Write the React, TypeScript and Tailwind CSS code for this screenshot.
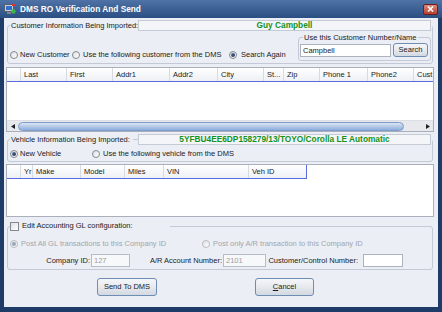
import React from 'react';

const custCols = [
    { label: '', w: 'w-[14px]' },
    { label: 'Last', w: 'w-[46px]' },
    { label: 'First', w: 'w-[46px]' },
    { label: 'Addr1', w: 'w-[57px]' },
    { label: 'Addr2', w: 'w-[48px]' },
    { label: 'City', w: 'w-[46px]' },
    { label: 'St...', w: 'w-[20px]' },
    { label: 'Zip', w: 'w-[36px]' },
    { label: 'Phone 1', w: 'w-[48px]' },
    { label: 'Phone2', w: 'w-[46px]' },
    { label: 'Cust', w: 'w-[30px]' },
];

const vehCols = [
    { label: '', w: 'w-[14px]' },
    { label: 'Yr', w: 'w-[12px]' },
    { label: 'Make', w: 'w-[48px]' },
    { label: 'Model', w: 'w-[44px]' },
    { label: 'Miles', w: 'w-[39px]' },
    { label: 'VIN', w: 'w-[85px]' },
];

function Radio({ checked, disabled }: { checked?: boolean; disabled?: boolean }) {
    return (
        <span
            className={
                'w-[8px] h-[8px] shrink-0 rounded-full border flex items-center justify-center bg-gradient-to-br from-[#dde0e5] to-white ' +
                (disabled ? 'border-[#b9bcc1]' : 'border-[#85888d]')
            }
        >
            {checked ? (
                <span
                    className={
                        'w-[4px] h-[4px] rounded-full ' +
                        (disabled ? 'bg-[#9aa6b8]' : 'bg-gradient-to-br from-[#5a7cae] to-[#1c2b44]')
                    }
                />
            ) : null}
        </span>
    );
}

function HeaderCell({ label, w }: { label: string; w: string }) {
    return (
        <div className={w + ' shrink-0 h-full border-r border-[#d6dae1] pl-[3px] flex items-center overflow-hidden whitespace-nowrap bg-gradient-to-b from-white to-[#eef0f4]'}>
            {label}
        </div>
    );
}

function Btn({ children, w }: { children: React.ReactNode; w: string }) {
    return (
        <button className={w + ' h-full rounded-[3px] border border-[#6e8db5] bg-gradient-to-b from-[#f4f6f9] via-[#e6e9ee] to-[#d3d9e2] flex items-center justify-center text-[#1b1b1b]'}>
            {children}
        </button>
    );
}

function Scrollbar() {
    return (
        <div className="h-[11px] flex items-center bg-[#e7e9ed] border-t border-[#dcdfe5]">
            <div className="w-[11px] h-full flex items-center justify-center">
                <svg width="4" height="5" viewBox="0 0 4 5">
                    <path d="M4 0 L0 2.5 L4 5 Z" fill="#222" />
                </svg>
            </div>
            <div className="w-[386px] h-[9px] rounded-full border border-[#7d9cc7] bg-gradient-to-b from-[#dbe6f5] via-[#b3c9e8] to-[#8eaedb]" />
            <div className="flex-1" />
            <div className="w-[10px] h-full flex items-center justify-center">
                <svg width="4" height="5" viewBox="0 0 4 5">
                    <path d="M0 0 L4 2.5 L0 5 Z" fill="#222" />
                </svg>
            </div>
        </div>
    );
}

export default function App() {
    return (
        <div className="w-[442px] h-[312px] flex flex-col overflow-hidden bg-[#1f3c69] font-['Liberation_Sans',Arial,sans-serif] text-[7.5px] leading-none text-[#1b1b1b]">
            {/* title bar */}
            <div className="h-[18px] shrink-0 flex items-center pl-[4px] pr-[4px] bg-gradient-to-b from-[#4f73a6] to-[#2b4e83]">
                <svg width="12" height="12" viewBox="0 0 12 12">
                    <rect x="0.5" y="1.5" width="9" height="7" fill="#c9ced6" stroke="#56606e" />
                    <rect x="2" y="3" width="6" height="4" fill="#2f6fd0" />
                    <rect x="3" y="9" width="4" height="2" fill="#7d8590" />
                    <circle cx="9.5" cy="8.5" r="2.2" fill="#3bb54a" />
                    <rect x="8" y="1" width="3" height="2" fill="#d33" />
                </svg>
                <span className="ml-[4px] text-white font-bold text-[8.3px]">DMS RO Verification And Send</span>
                <div className="ml-auto w-[15px] h-[11px] rounded-[2px] border border-[#6b1f1f] bg-gradient-to-b from-[#e08a7c] to-[#b73a2c] flex items-center justify-center">
                    <svg width="7" height="6" viewBox="0 0 7 6">
                        <path d="M1 0.5 L6 5.5 M6 0.5 L1 5.5" stroke="white" strokeWidth="1.6" />
                    </svg>
                </div>
            </div>

            {/* client area */}
            <div className="flex-1 mx-[4px] mb-[5px] bg-[#ebeef4] pl-[2px] pr-[4px] flex flex-col">
                {/* customer group */}
                <fieldset className="mt-[2px] mx-[1px] border border-[#c3cad6] rounded-[3px]">
                    <legend className="ml-[2px] px-[1px]">
                        <div className="flex items-center h-[11px]">
                            <span className="w-[122px] whitespace-nowrap">Customer Information Being Imported:</span>
                            <span className="w-[5px]" />
                            <div className="w-[293px] h-[11px] border border-[#c5cbd5] bg-[#f3f5f8] flex items-center justify-center text-[#14921c] font-bold text-[8.3px]">
                                Guy Campbell
                            </div>
                        </div>
                    </legend>
                    <div className="flex items-end pl-[2px] mr-[1px] mt-[2px] mb-[2px]">
                        <label className="w-[62px] h-[10px] mb-[1px] flex items-center gap-[2px]">
                            <Radio />
                            <span>New Customer</span>
                        </label>
                        <label className="w-[157px] h-[10px] mb-[1px] flex items-center gap-[3px]">
                            <Radio />
                            <span className="whitespace-nowrap">Use the following customer from the DMS</span>
                        </label>
                        <label className="flex-1 h-[10px] mb-[1px] flex items-center gap-[4px]">
                            <Radio checked />
                            <span>Search Again</span>
                        </label>
                        <fieldset className="w-[133px] border border-[#c3cad6] rounded-[3px]">
                            <legend className="ml-[4px] px-[1px] leading-[9px]">Use this Customer Number/Name</legend>
                            <div className="flex items-center pl-[1px] pt-[1px] pb-[3px] gap-[2px]">
                                <input
                                    className="w-[91px] h-[13px] border border-[#abb3bf] bg-white px-[2px] text-[7.5px] outline-none"
                                    defaultValue="Campbell"
                                    readOnly
                                />
                                <div className="h-[14px]">
                                    <Btn w="w-[35px]">Search</Btn>
                                </div>
                            </div>
                        </fieldset>
                    </div>
                </fieldset>

                {/* customer grid */}
                <div className="mt-[3px] h-[65px] border border-[#a9b0bc] bg-white flex flex-col overflow-hidden">
                    <div className="h-[14px] flex border-b border-[#5a6de0] overflow-hidden">
                        {custCols.map((c, i) => (
                            <HeaderCell key={i} label={c.label} w={c.w} />
                        ))}
                    </div>
                    <div className="flex-1 bg-white" />
                    <Scrollbar />
                </div>

                {/* vehicle group */}
                <fieldset className="mt-[2px] mx-[1px] border border-[#c3cad6] rounded-[3px]">
                    <legend className="ml-[2px] px-[1px]">
                        <div className="flex items-center h-[11px]">
                            <span className="w-[122px] whitespace-nowrap">Vehicle Information Being Imported:</span>
                            <span className="w-[5px] h-px bg-[#c3cad6]" />
                            <div className="w-[293px] h-[11px] border border-[#c5cbd5] bg-[#f3f5f8] flex items-center justify-center text-[#14921c] font-bold text-[8.3px]">
                                5YFBU4EE6DP158279/13/TOYO/Corolla LE Automatic
                            </div>
                        </div>
                    </legend>
                    <div className="flex items-center pl-[2px] pt-[4px] pb-[2px]">
                        <label className="w-[82px] h-[10px] flex items-center gap-[2px]">
                            <Radio checked />
                            <span>New Vehicle</span>
                        </label>
                        <label className="h-[10px] flex items-center gap-[3px]">
                            <Radio />
                            <span className="whitespace-nowrap">Use the following vehicle from the DMS</span>
                        </label>
                    </div>
                </fieldset>

                {/* vehicle grid */}
                <div className="mt-[2px] h-[53px] border border-[#a9b0bc] bg-white flex flex-col">
                    <div className="h-[14px] flex">
                        <div className="flex border-b border-[#5a6de0]">
                            {vehCols.map((c, i) => (
                                <HeaderCell key={i} label={c.label} w={c.w} />
                            ))}
                            <div className="w-[58px] h-full border-r border-[#5a6de0] pl-[3px] flex items-center bg-gradient-to-b from-white to-[#eef0f4]">
                                Veh ID
                            </div>
                        </div>
                    </div>
                    <div className="flex-1" />
                </div>

                {/* GL group */}
                <fieldset className="mt-[4px] mx-[1px] border border-[#c3cad6] rounded-[3px]">
                    <legend className="ml-[2px]">
                        <div className="w-[160px] h-[10px] flex items-center gap-[3px]">
                            <span className="w-[9px] h-[9px] border border-[#85888d] bg-gradient-to-br from-[#dde0e5] to-white" />
                            <span className="whitespace-nowrap">Edit Accounting GL configuration:</span>
                        </div>
                    </legend>
                    <div className="pl-[2px] pt-[8px] flex items-center h-[18px] text-[#a2a6ad]">
                        <label className="w-[192px] h-[10px] flex items-center gap-[3px]">
                            <Radio checked disabled />
                            <span className="whitespace-nowrap">Post All GL transactions to this Company ID</span>
                        </label>
                        <label className="h-[10px] flex items-center gap-[3px]">
                            <Radio disabled />
                            <span className="whitespace-nowrap">Post only A/R transaction to this Company ID</span>
                        </label>
                    </div>
                    <div className="mt-[5px] mb-[2px] h-[13px] flex items-center">
                        <span className="w-[82px] text-right whitespace-nowrap">Company ID:</span>
                        <input
                            className="ml-[1px] w-[39px] h-[13px] border border-[#b7bcc5] bg-[#f7f8fa] px-[2px] text-[7.5px] text-[#9a9da3]"
                            defaultValue="127"
                            disabled
                        />
                        <span className="w-[92px] text-right whitespace-nowrap">A/R Account Number:</span>
                        <input
                            className="ml-[1px] w-[43px] h-[13px] border border-[#b7bcc5] bg-[#f7f8fa] px-[2px] text-[7.5px] text-[#9a9da3]"
                            defaultValue="2101"
                            disabled
                        />
                        <span className="w-[96px] pr-[4px] text-right whitespace-nowrap">Customer/Control Number:</span>
                        <input
                            className="ml-[1px] w-[40px] h-[13px] border border-[#abb3bf] bg-white px-[2px] text-[7.5px]"
                            defaultValue=""
                        />
                    </div>
                </fieldset>

                {/* buttons */}
                <div className="mt-[8px] h-[18px] flex">
                    <div className="ml-[91px] h-full">
                        <Btn w="w-[60px]">Send To DMS</Btn>
                    </div>
                    <div className="ml-[98px] h-full">
                        <Btn w="w-[59px]">
                            <span>
                                <span className="underline">C</span>ancel
                            </span>
                        </Btn>
                    </div>
                </div>
            </div>
        </div>
    );
}
